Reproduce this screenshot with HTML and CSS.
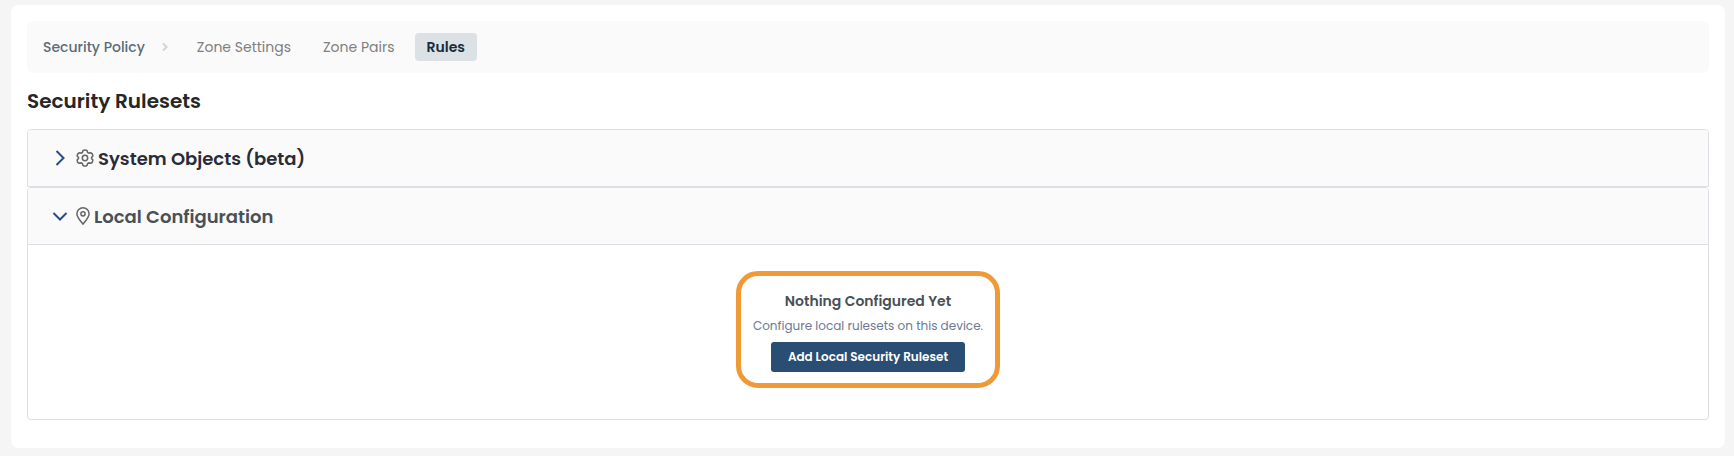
FILE: index.html
```html
<!DOCTYPE html>
<html lang="en">
<head>
<meta charset="utf-8">
<title>Security Policy</title>
<link rel="stylesheet" href="styles.css">
</head>
<body>
<main class="card">
  <nav class="crumbs" aria-label="Security Policy">
    <a class="crumb-root" href="#">Security Policy</a>
    <svg class="crumb-sep" viewBox="0 0 6 10" aria-hidden="true"><path d="M1 1.5 4.6 5 1 8.5"/></svg>
    <a class="tab" href="#">Zone Settings</a>
    <a class="tab" href="#">Zone Pairs</a>
    <a class="tab tab-active" href="#" aria-current="page">Rules</a>
  </nav>

  <h1 class="title">Security Rulesets</h1>

  <section class="panel panel-closed">
    <h2 class="panel-heading">
      <button class="panel-toggle" type="button" aria-expanded="false">
        <svg class="chevron" viewBox="0 0 16 16" aria-hidden="true"><path d="M4.500 1 11.500 8 4.500 15"/></svg>
        <svg class="icon icon-gear" viewBox="0 0 18 18" aria-hidden="true"><path d="M6.900 1.700Q9 .1 11.100 1.700L11.600 3.400 12.900 4.100 14.800 3.700Q17.100 4.700 16.800 7.100L15.500 8.500V9.500L16.800 10.900Q17.100 13.300 14.800 14.300L12.900 13.900 11.600 14.600 11.100 16.300Q9 17.900 6.900 16.300L6.400 14.600 5.100 13.900 3.200 14.300Q.9 13.300 1.200 10.900L2.500 9.500V8.500L1.200 7.100Q.9 4.700 3.200 3.700L5.100 4.100 6.400 3.400Z"/><circle cx="9" cy="9" r="2.700"/></svg>
        <span>System Objects (beta)</span>
      </button>
    </h2>
  </section>

  <section class="panel">
    <h2 class="panel-heading">
      <button class="panel-toggle panel-toggle-open" type="button" aria-expanded="true" aria-controls="local">
        <svg class="chevron" viewBox="0 0 16 16" aria-hidden="true"><path d="M1.500 5 8 11.500 14.500 5"/></svg>
        <svg class="icon icon-pin" viewBox="0 0 14 18" aria-hidden="true"><path d="M7 17.200C5.300 14.700 .9 10.400 .9 6.900a6.100 6.100 0 0 1 12.200 0C13.100 10.400 8.700 14.700 7 17.200Z"/><circle cx="7" cy="6.800" r="2.100"/></svg>
        <span>Local Configuration</span>
      </button>
    </h2>
    <div class="panel-body" id="local">
      <div class="empty">
        <h3 class="empty-title">Nothing Configured Yet</h3>
        <p class="empty-text">Configure local rulesets on this device.</p>
        <button class="add" type="button">Add Local Security Ruleset</button>
      </div>
    </div>
  </section>
</main>
</body>
</html>
```

FILE: styles.css
```css
* {
  box-sizing: border-box;
}

body {
  margin: 0;
  padding: 5px 9px 8px 11px;
  background: #f5f5f5;
  font-family: Poppins, Inter, sans-serif;
  font-size: 14px;
  line-height: 20px;
}

button {
  font-family: inherit;
  cursor: pointer;
}

.card {
  padding: 16px 16px 28px;
  border-radius: 8px;
  background: #fff;
}

.crumbs {
  display: flex;
  align-items: center;
  padding: 12px 16px;
  border-radius: 6px;
  background: #fafafa;
}

.crumbs a {
  text-decoration: none;
}

.crumb-root {
  color: #5b6b78;
  font-weight: 500;
}

.crumb-sep {
  width: 6px;
  height: 10px;
  margin: 0 17px;
  fill: none;
  stroke: #ced4e0;
  stroke-width: 2;
}

.tab {
  margin-right: 8px;
  padding: 4px 12px;
  border-radius: 4px;
  color: #808080;
}

.tab-active {
  background: #dce1e5;
  color: #152b40;
  font-weight: 600;
}

.title {
  margin: 12px 0;
  color: #262626;
  font-size: 20px;
  font-weight: 600;
  line-height: 32px;
}

.panel {
  border: 1px solid #dedfe4;
  border-radius: 4px;
}

.panel-closed {
  border-radius: 4px 4px 0 0;
}

.panel-heading {
  margin: 0;
}

.panel-toggle {
  display: flex;
  align-items: center;
  width: 100%;
  height: 56px;
  padding: 0 24px;
  border: 0;
  border-radius: 3px 3px 0 0;
  background: #fafafa;
  color: #2b2b38;
  font-size: 18px;
  font-weight: 600;
}

.panel-toggle-open {
  height: 57px;
  border-bottom: 1px solid #dedfe4;
  color: #495057;
}

.chevron {
  width: 16px;
  height: 16px;
  margin-right: 8px;
  fill: none;
  stroke: #2a4b8d;
  stroke-width: 2;
}

.icon {
  height: 18px;
  margin-right: 4px;
  fill: none;
  stroke: #666;
  stroke-width: 1.5;
}

.icon-gear {
  width: 18px;
}

.icon-pin {
  width: 14px;
}

.panel-body {
  display: flex;
  justify-content: center;
  padding: 26px 24px 31px;
}

.empty {
  display: flex;
  flex-direction: column;
  align-items: center;
  padding: 15px 12px 11px;
  border: 5px solid #f09a37;
  border-radius: 22px;
}

.empty-title {
  margin: 0;
  color: #495057;
  font-size: 14px;
  font-weight: 600;
}

.empty-text {
  margin: 5px 0 6px;
  color: #6c7a92;
  font-size: 12px;
}

.add {
  height: 30px;
  padding: 0 17px;
  border: 0;
  border-radius: 3px;
  background: #2a4d74;
  color: #fff;
  font-size: 12px;
  font-weight: 600;
}
```
